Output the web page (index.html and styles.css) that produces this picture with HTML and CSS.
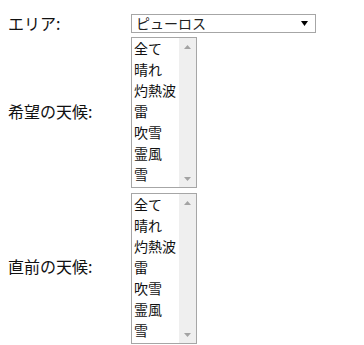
FILE: index.html
```html
<!DOCTYPE html>
<html lang="ja">
<head>
<meta charset="utf-8">
<link rel="stylesheet" href="styles.css">
</head>
<body>
<div class="form">
  <div class="label">エリア:</div>
  <div class="ctrl">
    <div class="select">
      <span class="select-text">ピューロス</span>
      <svg class="caret" width="7" height="5" viewBox="0 0 7 5"><path d="M0 0H7L3.5 5Z" fill="#000"/></svg>
    </div>
  </div>

  <div class="label">希望の天候:</div>
  <div class="ctrl list-row">
    <div class="listbox">
      <ul class="options">
        <li>全て</li><li>晴れ</li><li>灼熱波</li><li>雷</li><li>吹雪</li><li>霊風</li><li>雪</li>
      </ul>
      <div class="scrollbar">
        <svg width="7" height="4" viewBox="0 0 7 4"><path d="M0 4H7L3.5 0Z" fill="#a3a3a3"/></svg>
        <svg width="7" height="4" viewBox="0 0 7 4"><path d="M0 0H7L3.5 4Z" fill="#a3a3a3"/></svg>
      </div>
    </div>
  </div>

  <div class="label">直前の天候:</div>
  <div class="ctrl list-row">
    <div class="listbox">
      <ul class="options">
        <li>全て</li><li>晴れ</li><li>灼熱波</li><li>雷</li><li>吹雪</li><li>霊風</li><li>雪</li>
      </ul>
      <div class="scrollbar">
        <svg width="7" height="4" viewBox="0 0 7 4"><path d="M0 4H7L3.5 0Z" fill="#a3a3a3"/></svg>
        <svg width="7" height="4" viewBox="0 0 7 4"><path d="M0 0H7L3.5 4Z" fill="#a3a3a3"/></svg>
      </div>
    </div>
  </div>
</div>
</body>
</html>
```

FILE: styles.css
```css
html, body {
  margin: 0;
  padding: 0;
  background: #fff;
}
body {
  font-family: "Noto Sans CJK JP", "Noto Sans", sans-serif;
  color: #111;
}
.form {
  display: grid;
  grid-template-columns: 131px auto;
  align-items: center;
  padding-top: 13px;
}
.label {
  padding-left: 8px;
  font-size: 16px;
  line-height: 20px;
}
.ctrl {
  display: flex;
}
.list-row {
  padding-top: 4px;
}
.list-row + .label + .list-row {
  padding-top: 5px;
}
.select {
  box-sizing: border-box;
  width: 185px;
  height: 19px;
  border: 1px solid #a6a6a6;
  background: #fff;
  display: flex;
  align-items: center;
  justify-content: space-between;
  padding: 0 7px 0 4px;
}
.select-text {
  font-size: 14px;
  line-height: 17px;
  color: #222;
}
.caret {
  display: block;
}
.listbox {
  box-sizing: border-box;
  width: 66px;
  height: 151px;
  border: 1px solid #a6a6a6;
  background: #fff;
  display: flex;
  overflow: hidden;
}
.options {
  list-style: none;
  margin: 0;
  padding: 0 0 0 2px;
  flex: 1;
}
.options li {
  font-size: 14px;
  line-height: 21px;
  height: 21px;
  white-space: nowrap;
  color: #111;
}
.scrollbar {
  width: 17px;
  background: #efefef;
  display: flex;
  flex-direction: column;
  justify-content: space-between;
  align-items: center;
  padding: 7px 0 6px;
  box-sizing: border-box;
}
.scrollbar svg {
  display: block;
}
```
